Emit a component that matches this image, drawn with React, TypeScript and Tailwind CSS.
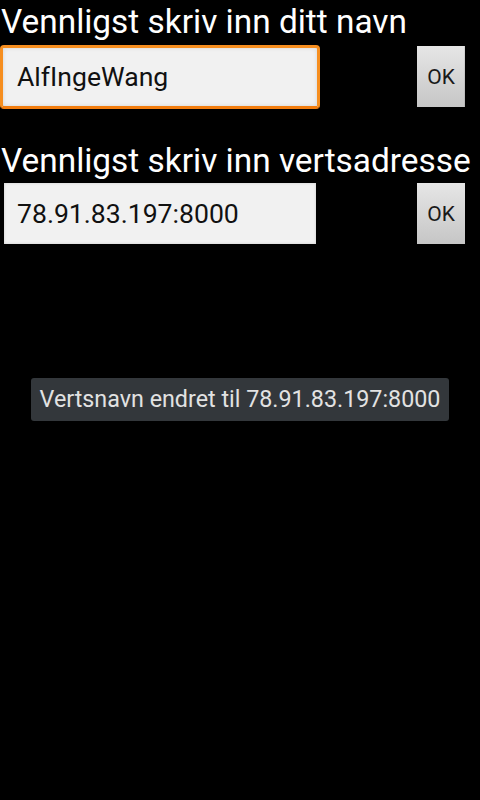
import React from "react";

export default function App() {
  return (
    <div
      className="w-[480px] h-[800px] bg-black flex flex-col overflow-hidden"
      style={{ fontFamily: "Roboto, 'Noto Sans', sans-serif" }}
    >
      <div className="h-[45px] flex items-center pl-[1px] text-white text-[33.4px] leading-none pb-[2px]">
        Vennligst skriv inn ditt navn
      </div>
      <div className="flex items-start h-[64px]">
        <div className="w-[320px] h-[64px] rounded-[4px] border-[3px] border-[#f68e1f] border-b-[#f27d0f] bg-[#f1f1f1] shadow-[inset_0_0_4px_rgba(0,0,0,0.12)] flex items-center pl-[14px] text-[26.6px] text-[#111]">
          AlfIngeWang
        </div>
        <div className="ml-[97px] mt-[1px] w-[48px] h-[61px] bg-gradient-to-b from-[#e6e6e6] to-[#c6c6c6] flex items-center justify-center pt-[3px] text-[21px] text-[#1a1a1a] shadow-[inset_-1px_0_0_rgba(0,0,0,0.08)]">
          OK
        </div>
      </div>
      <div className="h-[74px] flex items-end pl-[1px] text-white text-[33.4px] leading-none pb-[6px]">
        Vennligst skriv inn vertsadresse
      </div>
      <div className="flex items-start h-[61px]">
        <div className="ml-[4px] w-[312px] h-[61px] bg-[#f1f1f1] shadow-[inset_0_0_3px_rgba(0,0,0,0.15)] flex items-center pl-[13px] text-[26.6px] text-[#111]">
          78.91.83.197:8000
        </div>
        <div className="ml-[101px] w-[48px] h-[61px] bg-gradient-to-b from-[#e6e6e6] to-[#c6c6c6] flex items-center justify-center pt-[3px] text-[21px] text-[#1a1a1a]">
          OK
        </div>
      </div>
      <div className="mt-[134px] flex justify-center">
        <div className="w-[418px] h-[43px] rounded-[3px] bg-[#33373b] flex items-center justify-center text-[23.3px] text-[#e2e2e2]">
          Vertsnavn endret til 78.91.83.197:8000
        </div>
      </div>
    </div>
  );
}
